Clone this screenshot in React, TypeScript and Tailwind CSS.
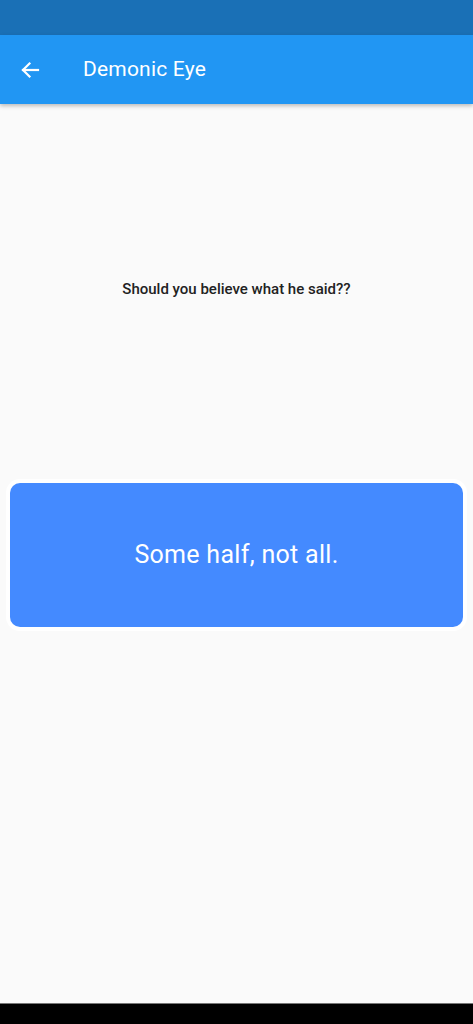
import React from 'react';

const App: React.FC = () => {
    return (
        <div className="w-[473px] h-[1024px] flex flex-col bg-[#fafafa] overflow-hidden" style={{ fontFamily: 'Roboto, "Noto Sans", sans-serif' }}>
            {/* status bar */}
            <div className="h-[35px] bg-[#1a70b6] shrink-0" />

            {/* app bar */}
            <div className="h-[69px] bg-[#2196f3] shrink-0 flex items-center shadow-[0_2px_4px_rgba(0,0,0,0.25)] relative z-10">
                <div className="w-[64px] flex items-center justify-center pr-1">
                    <svg width="24" height="24" viewBox="0 0 24 24" fill="none" stroke="white" strokeWidth="2.2" strokeLinecap="square">
                        <path d="M20 12H5" />
                        <path d="M11.5 5.5L5 12l6.5 6.5" />
                    </svg>
                </div>
                <div className="text-white text-[21px] ml-[19px] tracking-[0.2px]">Demonic Eye</div>
            </div>

            {/* content */}
            <div className="flex-1 flex flex-col items-center">
                <div className="mt-[174px] text-[15px] font-medium text-[#222]">Should you believe what he said??</div>

                <div className="mt-[178px] w-[461px] bg-white rounded-[14px] p-1">
                    <div className="h-[144px] bg-[#448aff] rounded-[10px] flex items-center justify-center">
                        <span className="text-white text-[25px] tracking-[0.3px]">Some half, not all.</span>
                    </div>
                </div>
            </div>

            {/* nav bar */}
            <div className="h-[21px] bg-black border-t border-[#777] shrink-0" />
        </div>
    );
};

export default App;
